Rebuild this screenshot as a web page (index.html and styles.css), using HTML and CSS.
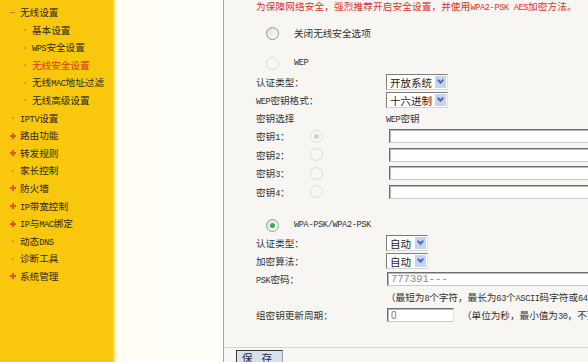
FILE: index.html
```html
<!DOCTYPE html>
<html lang="zh-CN">

<head>
    <meta charset="UTF-8">
    <title>无线安全设置</title>
    <link rel="stylesheet" href="styles.css">
</head>

<body>
    <div class="page">
        <nav class="menu">
            <ul>
                <li><i class="mark minus"></i>无线设置</li>
                <li class="sub"><i class="mark dot"></i>基本设置</li>
                <li class="sub"><i class="mark dot"></i><span class="en">WPS</span>安全设置</li>
                <li class="sub active"><i class="mark dot"></i>无线安全设置</li>
                <li class="sub"><i class="mark dot"></i>无线<span class="en">MAC</span>地址过滤</li>
                <li class="sub"><i class="mark dot"></i>无线高级设置</li>
                <li><i class="mark dot"></i><span class="en">IPTV</span>设置</li>
                <li><i class="mark plus"></i>路由功能</li>
                <li><i class="mark plus"></i>转发规则</li>
                <li><i class="mark dot"></i>家长控制</li>
                <li><i class="mark plus"></i>防火墙</li>
                <li><i class="mark plus"></i><span class="en">IP</span>带宽控制</li>
                <li><i class="mark plus"></i><span class="en">IP</span>与<span class="en">MAC</span>绑定</li>
                <li><i class="mark dot"></i>动态<span class="en">DNS</span></li>
                <li><i class="mark dot"></i>诊断工具</li>
                <li><i class="mark plus"></i>系统管理</li>
            </ul>
        </nav>
        <div class="spacer"></div>
        <main class="main">
            <div class="form">
                <p class="warn">为保障网络安全，强烈推荐开启安全设置，并使用<span class="en">WPA2-PSK AES</span>加密方法。</p>

                <div class="row opt first"><span class="radio"></span><span>关闭无线安全选项</span></div>

                <div class="row opt second"><span class="radio disabled"></span><span class="en">WEP</span></div>
                <div class="row tight"><span class="label">认证类型：</span><span class="select wide">开放系统<i class="arrow"></i></span></div>
                <div class="row"><span class="label"><span class="en">WEP</span>密钥格式：</span><span class="select wide">十六进制<i class="arrow"></i></span></div>
                <div class="row"><span class="label">密钥选择</span><span><span class="en">WEP</span>密钥</span></div>
                <div class="row key"><span class="label">密钥<span class="en">1</span>：</span><span class="radio disabled checked"></span><span class="field long"></span></div>
                <div class="row key"><span class="label">密钥<span class="en">2</span>：</span><span class="radio disabled"></span><span class="field long"></span></div>
                <div class="row key"><span class="label">密钥<span class="en">3</span>：</span><span class="radio disabled"></span><span class="field long"></span></div>
                <div class="row key"><span class="label">密钥<span class="en">4</span>：</span><span class="radio disabled"></span><span class="field long"></span></div>

                <div class="row opt third"><span class="radio on"></span><span class="en">WPA-PSK/WPA2-PSK</span></div>
                <div class="row"><span class="label">认证类型：</span><span class="select short">自动<i class="arrow"></i></span></div>
                <div class="row"><span class="label">加密算法：</span><span class="select short">自动<i class="arrow"></i></span></div>
                <div class="row"><span class="label"><span class="en">PSK</span>密码：</span><span class="field long value">777391---</span></div>
                <div class="row"><span class="label"></span><span>（最短为<span class="en">8</span>个字符，最长为<span class="en">63</span>个<span class="en">ASCII</span>码字符或<span class="en">64</span>个十六进制字符）</span></div>
                <div class="row"><span class="label">组密钥更新周期：</span><span class="field small num">0</span><span class="hint">（单位为秒，最小值为<span class="en">30</span>，不更新则为<span class="en">0</span>）</span></div>
            </div>
            <div class="actions">
                <button class="btn">保存</button>
            </div>
        </main>
    </div>
</body>

</html>
```

FILE: styles.css
```css
html,
body {
    margin: 0;
    height: 362px;
    overflow: hidden;
}

body {
    font-family: "Noto Sans CJK SC", sans-serif;
    font-size: 9.6px;
    color: #333;
}

.en {
    font-family: "Liberation Mono", monospace;
    font-size: 8.6px;
    letter-spacing: -0.35px;
}

.page {
    display: flex;
    height: 362px;
}

/* left menu */
.menu {
    width: 113px;
    flex: none;
    background: #f9c70b;
}

.menu ul {
    list-style: none;
    margin: 0;
    padding: 4px 0 0;
}

.menu li {
    height: 17.6px;
    line-height: 17.6px;
    padding-left: 9px;
    white-space: nowrap;
    color: #2e2a1c;
}

.menu li.sub {
    padding-left: 21px;
}

.menu li.active {
    color: #e5321b;
}

.mark {
    position: relative;
    display: inline-block;
    vertical-align: middle;
    width: 8px;
    height: 8px;
    margin: -2px 3px 0 0;
}

.mark.minus::before {
    content: "";
    position: absolute;
    left: 1px;
    top: 4px;
    width: 5px;
    height: 1px;
    background: #e0701c;
}

.mark.dot::before {
    content: "";
    position: absolute;
    left: 3px;
    top: 3px;
    width: 2px;
    height: 2px;
    border-radius: 1px;
    background: #e8841f;
}

.mark.plus::before,
.mark.plus::after {
    content: "";
    position: absolute;
    background: #e2521a;
}

.mark.plus::before {
    left: 1px;
    top: 3px;
    width: 6px;
    height: 2px;
}

.mark.plus::after {
    left: 3px;
    top: 1px;
    width: 2px;
    height: 6px;
}

.spacer {
    width: 110px;
    flex: none;
    background: linear-gradient(to right, #f6cf3c, #fcefb8 2px, #fffdf4 5px, #fffefb);
}

/* main area */
.main {
    flex: 1;
    min-width: 0;
    overflow: hidden;
    border-left: 1px solid #b3a793;
    background: #f7f6f2;
}

.form {
    padding-left: 32px;
    white-space: nowrap;
}

.warn {
    height: 18px;
    line-height: 18px;
    margin: -3px 0 0;
    color: #d9331f;
    letter-spacing: 0.15px;
}

.row {
    display: flex;
    align-items: center;
    height: 18px;
}

.row.first {
    margin-top: 9px;
}

.row.second {
    margin-top: 12px;
}

.row.tight {
    margin-top: 1px;
}

.row.third {
    margin-top: 15px;
}

.row.opt {
    padding-left: 10px;
}

.row.opt .radio {
    margin-right: 15px;
}

.row.key {
    height: 18.5px;
}

.label {
    width: 130px;
    flex: none;
}

.row.key .label {
    width: 54px;
}

.row.key .radio {
    margin-right: 65px;
}

/* radios */
.radio {
    position: relative;
    width: 11px;
    height: 11px;
    flex: none;
    border: 1px solid #8e979f;
    border-radius: 50%;
    background: linear-gradient(135deg, #dcdedf, #fff);
}

.radio.disabled {
    border-color: #dadcdc;
    background: #f7f7f5;
}

.radio.checked::after,
.radio.on::after {
    content: "";
    position: absolute;
    left: 3px;
    top: 3px;
    width: 5px;
    height: 5px;
    border-radius: 50%;
    background: #cfcfcf;
}

.radio.on {
    border-color: #8aa096;
}

.radio.on::after {
    background: #3fae4a;
}

/* select boxes */
.select {
    position: relative;
    display: flex;
    align-items: center;
    height: 14px;
    padding-left: 3px;
    border: 1px solid;
    border-color: #7d7d7d #dedede #d4d4d4 #7d7d7d;
    background: #fff;
    font-size: 10.5px;
    color: #222;
}

.select.wide {
    width: 57px;
}

.select.short {
    width: 37px;
}

.arrow {
    position: absolute;
    right: 1px;
    top: 1px;
    width: 11px;
    height: 12px;
    background: #c6d3ee;
}

.arrow::before {
    content: "";
    position: absolute;
    left: 3px;
    top: 2px;
    width: 3px;
    height: 3px;
    border: solid #4a6cc2;
    border-width: 0 2px 2px 0;
    transform: rotate(45deg);
}

/* text fields */
.field {
    display: flex;
    align-items: center;
    height: 12px;
    padding-left: 3px;
    border: 1px solid;
    border-color: #6f6f6f #e2e2e2 #c9c9c9 #6f6f6f;
    box-shadow: inset 1px 1px 0 #b9b9b9;
    background: #fff;
    margin-left: 1px;
}

.field.long {
    width: 230px;
    flex: none;
}

.field.value {
    font-family: "Liberation Mono", monospace;
    font-size: 10.5px;
    color: #8a8a8a;
}

.field.small {
    width: 62px;
    flex: none;
}

.field.num {
    font-family: "Liberation Sans", sans-serif;
    font-size: 10px;
    color: #777;
}

.hint {
    margin-left: 8px;
}

/* save button */
.actions {
    margin-top: 23px;
    padding: 2px 0 0 12px;
    border-top: 1px solid #e9cfb4;
}

.btn {
    width: 47px;
    height: 15px;
    padding: 0 0 0 5px;
    border: 1px solid;
    border-color: #3a3a3a #9aa3b0 #9aa3b0 #3a3a3a;
    background: #d8e0eb;
    font-family: "Noto Sans CJK SC", sans-serif;
    font-size: 10.5px;
    line-height: 12px;
    letter-spacing: 9px;
    text-align: left;
    color: #1e2a44;
}
```
